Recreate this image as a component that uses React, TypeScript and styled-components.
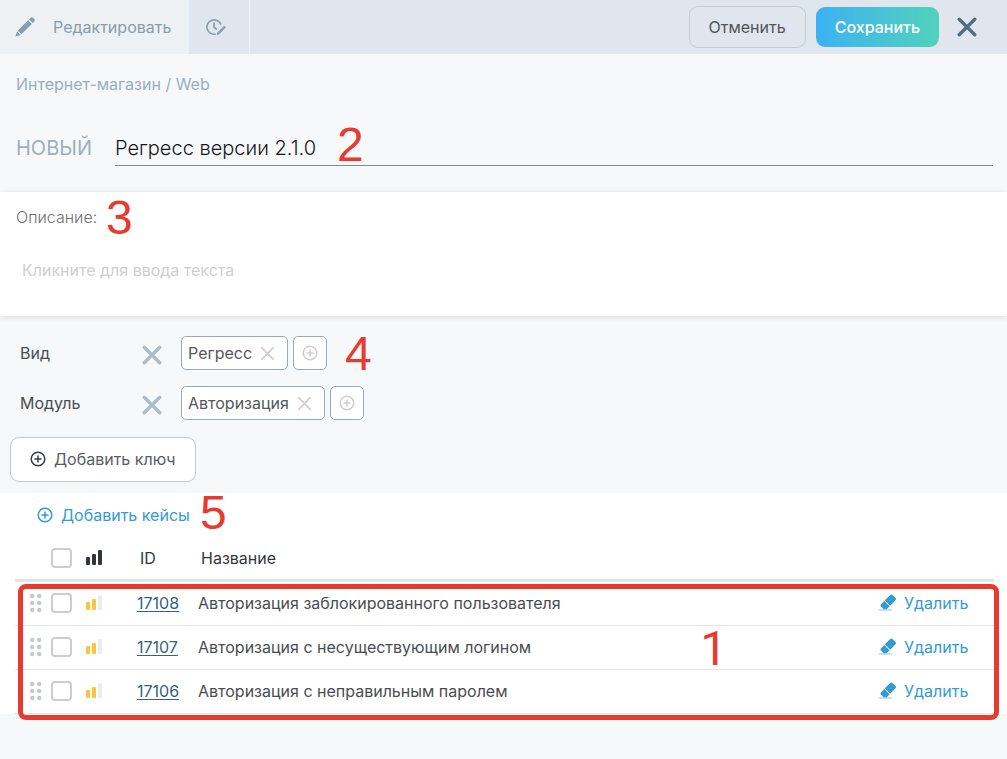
import React from "react";
import styled, { createGlobalStyle } from "styled-components";

const Global = createGlobalStyle`
  *, *::before, *::after { box-sizing: border-box; }
  body {
    margin: 0;
    background: #f7f8fa;
    color: #4a4d50;
    font-family: Inter, "Liberation Sans", sans-serif;
    font-size: 16px;
    line-height: 24px;
  }
  button, input, textarea { font: inherit; color: inherit; }
  button { padding: 0; border: 0; background: none; cursor: pointer; }
  svg { display: block; flex: none; }
`;

const Page = styled.div`
  min-height: 100vh;
`;

const Toolbar = styled.header`
  display: flex;
  height: 54px;
  background: #dfe6ed;
`;

const EditTab = styled.button`
  display: flex;
  align-items: center;
  gap: 18px;
  padding: 0 18px 0 15px;
  background: #edf1f3;
  color: #8a9dab;
`;

const HistoryTab = styled.button`
  display: flex;
  align-items: center;
  justify-content: center;
  width: 61px;
  padding-right: 6px;
  border-right: 1px solid #edf1f3;
  color: #8a9dab;
`;

const ToolbarActions = styled.div`
  display: flex;
  align-items: center;
  gap: 10px;
  margin-left: auto;
  padding-right: 30px;
`;

const ActionButton = styled.button<{ $primary?: boolean }>`
  height: ${(p) => (p.$primary ? 40 : 42)}px;
  padding: 0 19px;
  border-radius: 9px;
  border: ${(p) => (p.$primary ? "0" : "1px solid #c5cad3")};
  background: ${(p) => (p.$primary ? "linear-gradient(90deg, #3cb2f3, #51d2bc)" : "transparent")};
  color: ${(p) => (p.$primary ? "#fff" : "#505457")};
  font-weight: ${(p) => (p.$primary ? 500 : 400)};
`;

const CloseButton = styled.button`
  margin-left: 8px;
  color: #526d80;
`;

const Breadcrumbs = styled.nav`
  padding: 18px 16px 0;
  color: #9aafbb;

  a { color: inherit; text-decoration: none; }
`;

const TitleRow = styled.div`
  display: flex;
  align-items: center;
  padding: 34px 14px 26px 16px;
`;

const TitleLabel = styled.label`
  width: 99px;
  flex: none;
  color: #9eb0ba;
  font-size: 20px;
`;

const TitleField = styled.div`
  position: relative;
  flex: 1;
`;

const TitleInput = styled.input`
  display: block;
  width: 100%;
  height: 36px;
  padding: 0;
  border: 0;
  border-bottom: 1px solid #85898d;
  border-radius: 0;
  background: none;
  outline: none;
  color: #17191b;
  font-size: 20px;
  font-weight: 300;
`;

const Description = styled.section`
  position: relative;
  height: 124px;
  padding: 13px 16px;
  background: #fff;
  box-shadow: 0 1px 6px rgba(0, 0, 0, 0.12);
`;

const DescriptionLabel = styled.label`
  display: block;
  color: #707070;
  font-weight: 300;
`;

const DescriptionInput = styled.textarea`
  display: block;
  width: 100%;
  height: 48px;
  margin-top: 29px;
  padding: 0 6px;
  border: 0;
  resize: none;
  outline: none;
  background: none;

  &::placeholder { color: #cfcfcf; opacity: 1; }
`;

const Keys = styled.section`
  padding: 20px 10px 11px;
`;

const KeyRow = styled.div`
  position: relative;
  display: flex;
  align-items: center;
  height: 34px;
  margin-bottom: 16px;
  padding-left: 10px;
`;

const KeyName = styled.span`
  width: 122px;
`;

const RemoveKey = styled.button`
  width: 39px;
  padding-top: 4px;
  color: #a9bdca;
`;

const Tag = styled.span`
  display: flex;
  align-items: center;
  height: 34px;
  gap: 8px;
  padding: 0 12px 0 6px;
  border: 1px solid #98abb8;
  border-radius: 5px;
  background: #fff;
  color: #555759;
`;

const RemoveTag = styled.button`
  color: #cfcfcf;
`;

const AddTag = styled.button`
  display: grid;
  place-items: center;
  width: 34px;
  height: 34px;
  margin-left: 5px;
  border: 1px solid #98abb8;
  border-radius: 5px;
  background: #fff;
  color: #cfcfcf;
`;

const AddKey = styled.button`
  display: flex;
  align-items: center;
  gap: 8px;
  height: 45px;
  margin-top: 17px;
  padding: 0 19px 2px;
  border: 1px solid #c5c9d0;
  border-radius: 9px;
  background: #fff;
  color: #5a5d5f;

  svg { color: #3a3d40; }
`;

const Cases = styled.section`
  padding: 10px 13px 0 15px;
  background: #fff;
`;

const AddCases = styled.button`
  position: relative;
  display: flex;
  align-items: center;
  gap: 8px;
  margin-left: 22px;
  color: #349ad3;
`;

const TableWrap = styled.div`
  position: relative;
  padding-top: 9px;
`;

const Table = styled.table`
  width: 100%;
  border-spacing: 0;
  table-layout: fixed;

  th, td {
    height: 44px;
    padding: 0 0 2px;
    border-bottom: 1px solid #dfe6ea;
    text-align: left;
    font-weight: 400;
    white-space: nowrap;
  }
  th {
    height: 46px;
    padding: 0;
    border-bottom: 3px solid #dfe6ea;
    color: #33373c;
  }
  td a { color: #2f6380; text-underline-offset: 2px; }
`;

const HeadText = styled.span`
  padding-left: 3px;
`;

const Checkbox = styled.input`
  appearance: none;
  display: block;
  width: 21px;
  height: 20px;
  margin: 0;
  border: 2px solid #cdcdcd;
  border-radius: 4px;
  background: #fff;
`;

const DragHandle = styled.button`
  display: block;
  margin-left: 15px;
  color: #c5c8d2;
`;

const DeleteButton = styled.button`
  display: flex;
  align-items: center;
  gap: 7px;
  color: #349ad3;
`;

const Highlight = styled.div`
  position: absolute;
  inset: 57px -5px -6px 3px;
  border: 5px solid #e63b30;
  border-radius: 8px;
  pointer-events: none;
`;

const Marker = styled.span<{ $left: string; $top: number; $plain?: boolean }>`
  position: absolute;
  left: ${(p) => p.$left};
  top: ${(p) => p.$top}px;
  color: #e63b30;
  font-family: ${(p) => (p.$plain ? "Roboto, sans-serif" : '"Liberation Sans", Arial, sans-serif')};
  font-size: 48px;
  font-weight: 400;
  line-height: 48px;
  pointer-events: none;
`;

const Cross = ({ size, width }: { size: number; width: number }) => (
  <svg width={size} height={size} viewBox="0 0 18 18" fill="none" stroke="currentColor" strokeWidth={width} strokeLinecap="round">
    <path d="M2 2l14 14M16 2L2 16" />
  </svg>
);

const PlusCircle = () => (
  <svg width="16" height="16" viewBox="0 0 16 16" fill="none" stroke="currentColor" strokeWidth="1.5" strokeLinecap="round">
    <circle cx="8" cy="8" r="6.8" />
    <path d="M8 5v6M5 8h6" />
  </svg>
);

const Pencil = () => (
  <svg width="20" height="20" viewBox="0 0 20 20" fill="currentColor">
    <path d="M13.200 3.200l3.700 3.700L6.400 17.300l-3.700-3.700zM14 2.400l1.600-1.600c.7-.7 1.700-.7 2.400 0l1.300 1.300c.7.700.7 1.700 0 2.400l-1.600 1.600zM2.100 14.300l3.600 3.600L.3 19.600z" />
  </svg>
);

const ClockPencil = () => (
  <svg width="20" height="18" viewBox="0 0 20 18" fill="none" stroke="currentColor" strokeWidth="1.700" strokeLinecap="round">
    <path d="M9 16.200A7.200 7.200 0 1 1 14.700 6M8 5v4l2.300 2" />
    <path d="M12.800 14.800l5.600-5.600" strokeWidth="2.400" />
    <path d="M11.700 16l.8-1.600" />
  </svg>
);

const Bars = ({ colors }: { colors: string[] }) => (
  <svg width="17" height="16" viewBox="0 0 17 16">
    <rect x="0" y="7" width="4" height="8" rx="1" fill={colors[0]} />
    <rect x="6" y="4" width="4" height="11" rx="1" fill={colors[1]} />
    <rect x="12" y="0" width="4" height="15" rx="1" fill={colors[2]} />
  </svg>
);

const Dots = () => (
  <svg width="12" height="20" viewBox="0 0 12 20" fill="currentColor">
    {[3, 10, 17].map((y) => (
      <g key={y}>
        <circle cx="2.200" cy={y} r="2.200" />
        <circle cx="9.200" cy={y} r="2.200" />
      </g>
    ))}
  </svg>
);

const Eraser = () => (
  <svg width="18" height="18" viewBox="0 0 18 18" fill="currentColor">
    <path d="M5.800 6.300l5.400-5.400c.7-.7 1.500-.7 2.200 0l3.100 3.100c.7.7.7 1.500 0 2.200l-5.300 5.500zM5.200 6.900l5.400 5.400-2.400 2.400c-.4.400-.7.500-1.200.5H4.600l-2.500-2.500c-.8-.8-.8-1.600 0-2.500z" />
    <path d="M0 15.500h13v1H0z" opacity=".6" />
  </svg>
);

const keys = [
  { name: "Вид", value: "Регресс" },
  { name: "Модуль", value: "Авторизация" },
];

const cases = [
  { id: 17108, name: "Авторизация заблокированного пользователя" },
  { id: 17107, name: "Авторизация с несуществующим логином" },
  { id: 17106, name: "Авторизация с неправильным паролем" },
];

export default function App() {
  return (
    <Page>
      <Global />
      <Toolbar>
        <EditTab><Pencil />Редактировать</EditTab>
        <HistoryTab aria-label="История"><ClockPencil /></HistoryTab>
        <ToolbarActions>
          <ActionButton>Отменить</ActionButton>
          <ActionButton $primary>Сохранить</ActionButton>
          <CloseButton aria-label="Закрыть"><Cross size={20} width={3} /></CloseButton>
        </ToolbarActions>
      </Toolbar>

      <main>
        <Breadcrumbs><a href="#shop">Интернет-магазин</a> / <a href="#web">Web</a></Breadcrumbs>

        <TitleRow>
          <TitleLabel htmlFor="title">НОВЫЙ</TitleLabel>
          <TitleField>
            <TitleInput id="title" defaultValue="Регресс версии 2.1.0" />
            <Marker $left="222px" $top={-9}>2</Marker>
          </TitleField>
        </TitleRow>

        <Description>
          <DescriptionLabel htmlFor="description">Описание:</DescriptionLabel>
          <DescriptionInput id="description" placeholder="Кликните для ввода текста" />
          <Marker $left="106px" $top={2}>3</Marker>
        </Description>

        <Keys>
          {keys.map((key, index) => (
            <KeyRow key={key.name}>
              <KeyName>{key.name}</KeyName>
              <RemoveKey aria-label={"Удалить ключ " + key.name}><Cross size={20} width={3} /></RemoveKey>
              <Tag>
                {key.value}
                <RemoveTag aria-label={"Убрать " + key.value}><Cross size={15} width={2} /></RemoveTag>
              </Tag>
              <AddTag aria-label="Добавить значение"><PlusCircle /></AddTag>
              {index === 0 && <Marker $left="335px" $top={-6}>4</Marker>}
            </KeyRow>
          ))}
          <AddKey><PlusCircle />Добавить ключ</AddKey>
        </Keys>

        <Cases>
          <AddCases>
            <PlusCircle />Добавить кейсы
            <Marker $left="163px" $top={-14}>5</Marker>
          </AddCases>
          <TableWrap>
            <Table>
              <colgroup>
                <col style={{ width: 36 }} />
                <col style={{ width: 35 }} />
                <col style={{ width: 51 }} />
                <col style={{ width: 61 }} />
                <col />
                <col style={{ width: 115 }} />
              </colgroup>
              <thead>
                <tr>
                  <th />
                  <th><Checkbox type="checkbox" aria-label="Выбрать все" /></th>
                  <th><Bars colors={["#33373c", "#33373c", "#33373c"]} /></th>
                  <th><HeadText>ID</HeadText></th>
                  <th><HeadText>Название</HeadText></th>
                  <th />
                </tr>
              </thead>
              <tbody>
                {cases.map((item) => (
                  <tr key={item.id}>
                    <td><DragHandle aria-label="Переместить"><Dots /></DragHandle></td>
                    <td><Checkbox type="checkbox" aria-label={"Выбрать " + item.id} /></td>
                    <td><Bars colors={["#fdc53f", "#fdc53f", "#e9edef"]} /></td>
                    <td><a href={"#" + item.id}>{item.id}</a></td>
                    <td>{item.name}</td>
                    <td><DeleteButton><Eraser />Удалить</DeleteButton></td>
                  </tr>
                ))}
              </tbody>
            </Table>
            <Highlight />
            <Marker $plain $left="70%" $top={98}>1</Marker>
          </TableWrap>
        </Cases>
      </main>
    </Page>
  );
}
